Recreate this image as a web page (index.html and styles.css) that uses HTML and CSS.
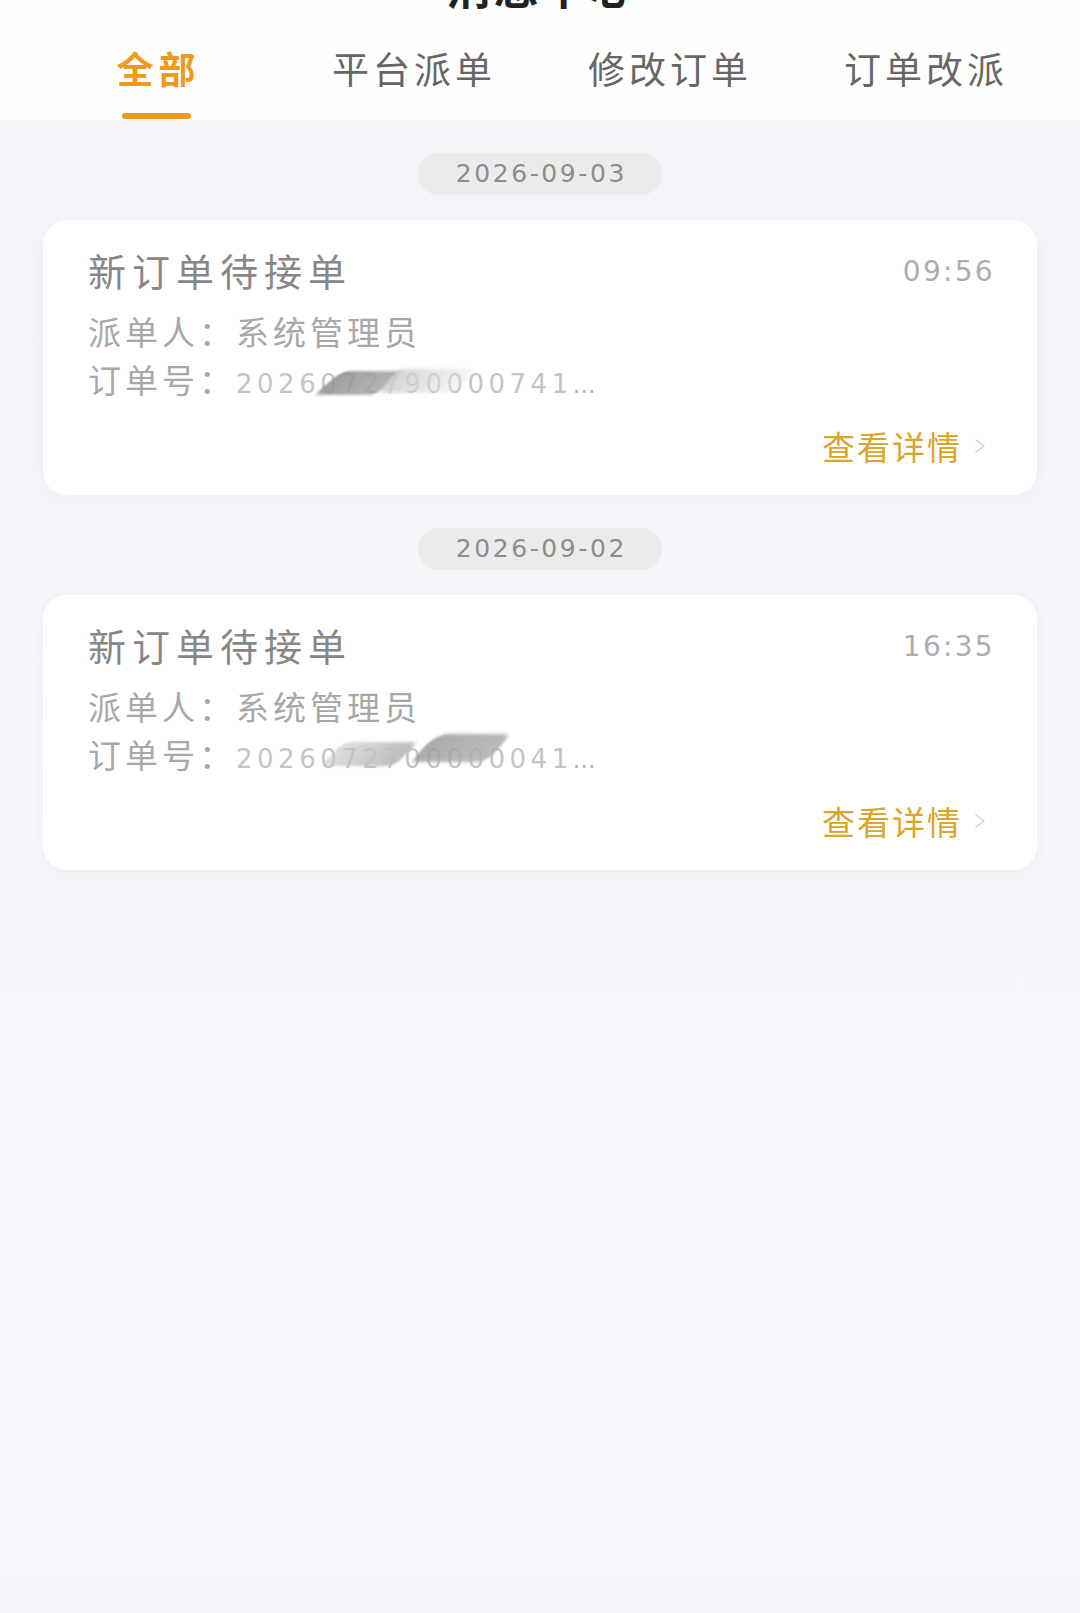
FILE: index.html
```html
<!DOCTYPE html>
<html lang="zh-CN">
<head>
<meta charset="utf-8">
<title>消息中心</title>
<link rel="stylesheet" href="styles.css">
</head>
<body>
<div class="page">
  <header class="topbar">
    <h1 class="title">消息中心</h1>
    <nav class="tabs">
      <div class="tab active"><span class="tab-label">全部</span><i class="tab-bar"></i></div>
      <div class="tab"><span class="tab-label">平台派单</span></div>
      <div class="tab"><span class="tab-label">修改订单</span></div>
      <div class="tab"><span class="tab-label">订单改派</span></div>
    </nav>
  </header>

  <main class="list">
    <section class="group">
      <div class="date"><span class="date-pill">2026-09-03</span></div>
      <article class="card">
        <div class="card-head">
          <h2 class="card-title">新订单待接单</h2>
          <span class="time">09:56</span>
        </div>
        <p class="line">派单人：系统管理员</p>
        <p class="line order">订单号：<span class="num">2026072790000741</span><span class="ell">...</span><i class="smudge s1a"></i><i class="smudge s1b"></i></p>
        <div class="card-foot">
          <span class="more">查看详情</span>
          <svg class="chev" width="12" height="16" viewBox="0 0 12 16"><polyline points="2,2 10,8 2,14" fill="none" stroke="#cfcfcf" stroke-width="1.4" stroke-linecap="round" stroke-linejoin="round"/></svg>
        </div>
      </article>
    </section>

    <section class="group">
      <div class="date"><span class="date-pill">2026-09-02</span></div>
      <article class="card">
        <div class="card-head">
          <h2 class="card-title">新订单待接单</h2>
          <span class="time">16:35</span>
        </div>
        <p class="line">派单人：系统管理员</p>
        <p class="line order">订单号：<span class="num">2026072700000041</span><span class="ell">...</span><i class="smudge s2a"></i><i class="smudge s2b"></i></p>
        <div class="card-foot">
          <span class="more">查看详情</span>
          <svg class="chev" width="12" height="16" viewBox="0 0 12 16"><polyline points="2,2 10,8 2,14" fill="none" stroke="#cfcfcf" stroke-width="1.4" stroke-linecap="round" stroke-linejoin="round"/></svg>
        </div>
      </article>
    </section>
  </main>
</div>
</body>
</html>
```

FILE: styles.css
```css
* { box-sizing: border-box; }

html, body {
  margin: 0;
  padding: 0;
}

body {
  background: #f3f5f9;
  font-family: "Noto Sans CJK SC", "Noto Sans", sans-serif;
  color: #333;
  min-height: 1613px;
}

.page {
  width: 1080px;
  min-height: 1613px;
  background: linear-gradient(180deg, #f2f4f8 0%, #f5f7fb 100%);
}

/* ---------- top bar ---------- */
.topbar {
  background: #fefefe;
}

.title {
  margin: -36px 0 0 0;
  height: 44px;
  font-size: 45px;
  line-height: 44px;
  font-weight: 700;
  color: #222;
  text-align: center;
  letter-spacing: 2.5px;
  padding-left: 2.5px;
}

.tabs {
  display: grid;
  grid-template-columns: repeat(4, 1fr);
  padding: 0 28px;
  height: 112px;
}

.tab {
  display: flex;
  flex-direction: column;
  align-items: center;
  padding-top: 38px;
}

.tab-label {
  font-size: 37px;
  line-height: 44px;
  letter-spacing: 4px;
  padding-left: 4px;
  color: #666;
  white-space: nowrap;
}

.tab.active .tab-label {
  color: #f0991a;
  font-weight: 700;
  letter-spacing: 5px;
  padding-left: 5px;
}

.tab-bar {
  display: block;
  width: 69px;
  height: 6px;
  border-radius: 3px;
  background: #f0991a;
  margin-top: 23px;
}

/* ---------- list ---------- */
.group {
  padding-top: 33px;
}

.date {
  display: flex;
  justify-content: center;
}

.date-pill {
  display: block;
  width: 244px;
  height: 42px;
  border-radius: 21px;
  background: #ebebeb;
  font-family: "DejaVu Sans", "Noto Sans", sans-serif;
  font-size: 25px;
  line-height: 42px;
  letter-spacing: 2.6px;
  padding-left: 2.6px;
  text-align: center;
  color: #8c8c8c;
}

.card {
  margin: 25px 43px 0 43px;
  background: #ffffff;
  border-radius: 24px;
  padding: 28px 42px 27px 45px;
  box-shadow: 0 4px 16px rgba(60, 80, 120, 0.04);
}

.card-head {
  display: flex;
  justify-content: space-between;
  align-items: center;
  height: 44px;
}

.card-title {
  margin: 0;
  font-size: 38px;
  line-height: 44px;
  font-weight: 400;
  letter-spacing: 6px;
  color: #878787;
}

.time {
  font-family: "DejaVu Sans", "Noto Sans", sans-serif;
  font-size: 28px;
  line-height: 44px;
  letter-spacing: 2.3px;
  color: #adadad;
  padding-top: 4px;
}

.line {
  margin: 0;
  font-size: 33px;
  line-height: 48px;
  letter-spacing: 4px;
  color: #a8a8a8;
  white-space: nowrap;
}

.card-head + .line {
  margin-top: 15px;
}

.order {
  position: relative;
}

.num {
  font-family: "DejaVu Sans", "Noto Sans", sans-serif;
  font-size: 26px;
  line-height: 1;
  letter-spacing: 4.5px;
  color: #c4c4c4;
}

.ell {
  font-family: "DejaVu Sans", "Noto Sans", sans-serif;
  font-size: 24px;
  line-height: 1;
  letter-spacing: 0;
  color: #b5b5b5;
}

.smudge {
  position: absolute;
  display: block;
  border-radius: 6px;
  filter: blur(1.5px);
}

.s1a {
  left: 240px;
  top: 16px;
  width: 62px;
  height: 24px;
  background: linear-gradient(100deg, #8e8e8e, #a9a9a9);
  transform: skewX(-50deg);
  opacity: 0.85;
}

.s1b {
  left: 300px;
  top: 14px;
  width: 78px;
  height: 24px;
  background: linear-gradient(90deg, #cfcfcf, rgba(230,230,230,0.4));
  transform: skewX(-40deg);
  opacity: 0.9;
}

.s2a {
  left: 244px;
  top: 12px;
  width: 74px;
  height: 24px;
  background: linear-gradient(90deg, rgba(200,200,200,0.6), #bdbdbd);
  transform: skewX(-45deg);
}

.s2b {
  left: 335px;
  top: 4px;
  width: 76px;
  height: 28px;
  background: linear-gradient(120deg, #9a9a9a, #b3b3b3);
  transform: skewX(-40deg);
  border-radius: 14px 6px 10px 4px;
  opacity: 0.85;
}

.card-foot {
  display: flex;
  justify-content: flex-end;
  align-items: center;
  height: 44px;
  margin-top: 21px;
  padding-right: 9px;
}

.more {
  font-size: 33px;
  line-height: 44px;
  letter-spacing: 2px;
  color: #d9a52a;
}

.chev {
  display: block;
  margin-left: 12px;
}
```
